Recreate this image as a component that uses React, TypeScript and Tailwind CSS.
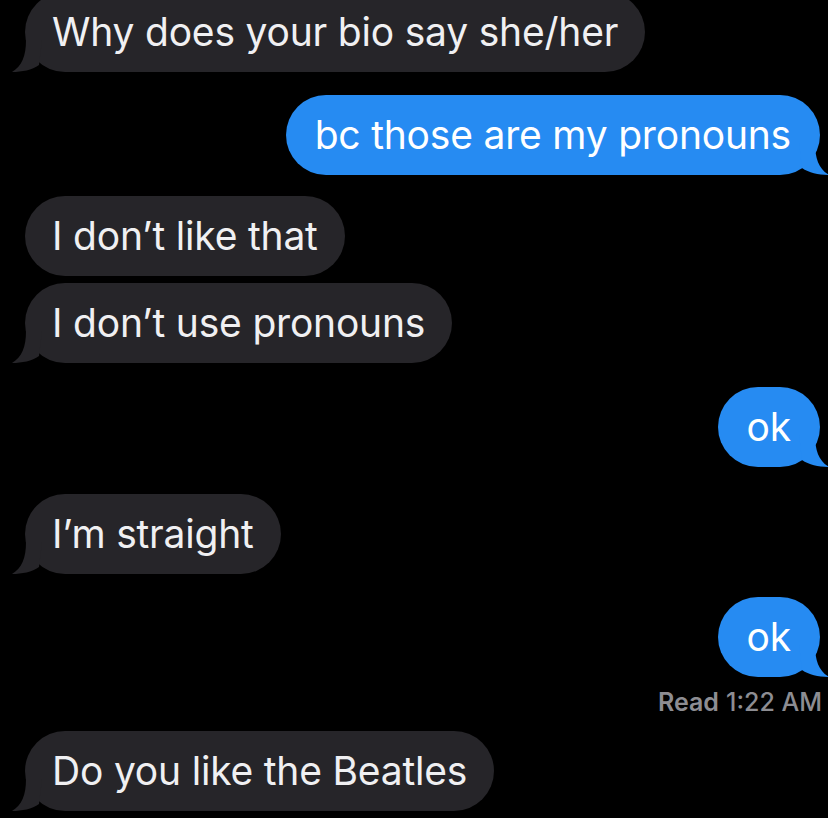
const messages = [
  { id: 1, from: "them", text: "Why does your bio say she/her", tail: true, gap: "mt-[-8px]" },
  { id: 2, from: "me", text: "bc those are my pronouns", tail: true, gap: "mt-[23px]" },
  { id: 3, from: "them", text: "I don’t like that", tail: false, gap: "mt-[21px]" },
  { id: 4, from: "them", text: "I don’t use pronouns", tail: true, gap: "mt-[7px]" },
  { id: 5, from: "me", text: "ok", tail: true, gap: "mt-[24px]" },
  { id: 6, from: "them", text: "I’m straight", tail: true, gap: "mt-[27px]" },
  { id: 7, from: "me", text: "ok", tail: true, gap: "mt-[23px]", read: "1:22 AM" },
  { id: 8, from: "them", text: "Do you like the Beatles", tail: true, gap: "mt-[14px]" },
];

const LeftTail = () => (
  <svg className="absolute bottom-0 left-[-13px]" width="30" height="32" viewBox="0 0 30 32">
    <path d="M14 0 C14 16 10 26 0 32 C10 32 20 30 27 25 L30 0 Z" fill="#262529" />
  </svg>
);

const RightTail = () => (
  <svg className="absolute bottom-0 right-[-9px]" width="30" height="32" viewBox="0 0 30 32">
    <path d="M16 0 C16 16 20 26 30 32 C20 32 10 30 3 25 L0 0 Z" fill="#268bf2" />
  </svg>
);

const Bubble = ({ from, text, tail }: { from: string; text: string; tail: boolean }) => {
  const mine = from === "me";
  return (
    <div
      className={`relative h-[80px] rounded-[40px] flex items-center text-[39px] tracking-[-0.2px] ${
        mine ? "bg-[#268bf2] text-white px-[29px]" : "bg-[#262529] text-[#f0f0f2] px-[27px]"
      }`}
    >
      {tail && (mine ? <RightTail /> : <LeftTail />)}
      <span className="relative whitespace-nowrap">{text}</span>
    </div>
  );
};

export default function App() {
  return (
    <div
      className="w-[828px] h-[818px] overflow-hidden bg-black flex flex-col"
      style={{ fontFamily: "Inter, 'Liberation Sans', sans-serif" }}
    >
      {messages.map((m) => (
        <div
          key={m.id}
          className={`flex flex-col ${m.gap} ${m.from === "me" ? "items-end pr-[8px]" : "items-start pl-[25px]"}`}
        >
          <Bubble from={m.from} text={m.text} tail={m.tail} />
          {m.read && (
            <div className="mt-[10px] mr-[-2px] text-[25px] leading-[30px] text-[#8d8d92]">
              <span className="font-semibold">Read</span> <span className="font-medium">{m.read}</span>
            </div>
          )}
        </div>
      ))}
    </div>
  );
}
